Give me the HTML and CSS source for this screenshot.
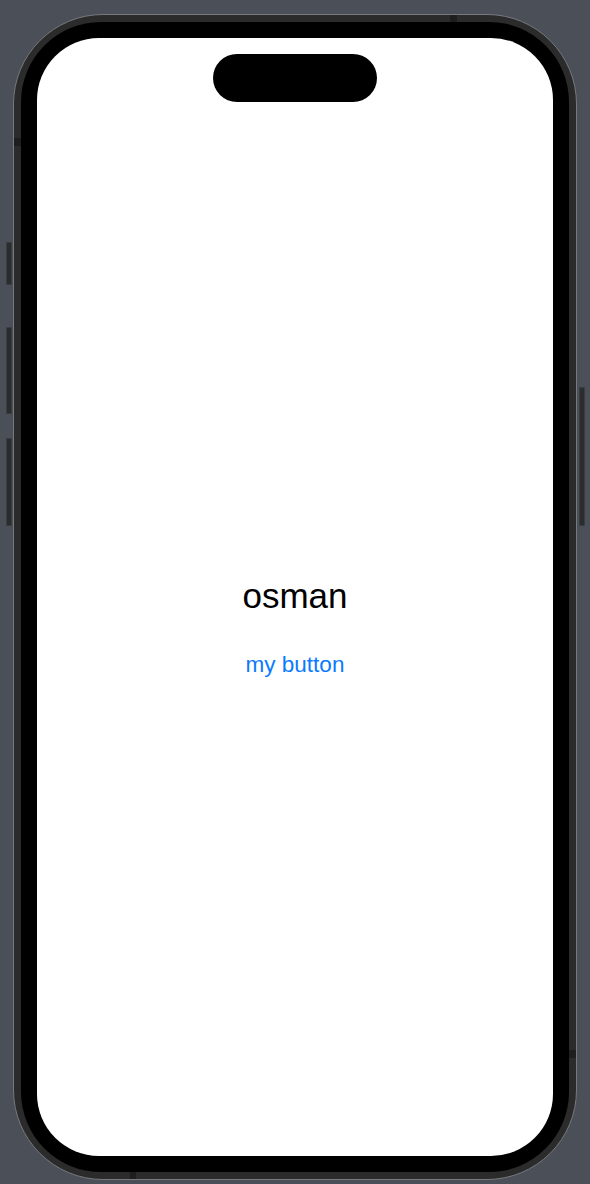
FILE: index.html
```html
<!DOCTYPE html>
<html lang="en">
<head>
<meta charset="utf-8">
<title>osman</title>
<link rel="stylesheet" href="styles.css">
</head>
<body>
  <div class="phone">
    <span class="side-btn btn-action"></span>
    <span class="side-btn btn-vol-up"></span>
    <span class="side-btn btn-vol-down"></span>
    <span class="side-btn btn-power"></span>
    <span class="band band-left"></span>
    <span class="band band-top"></span>
    <span class="band band-bottom"></span>
    <span class="band band-right"></span>
    <div class="bezel">
      <div class="screen">
        <div class="island"></div>
        <div class="content">
          <div class="title">osman</div>
          <button class="link-btn" type="button">my button</button>
        </div>
      </div>
    </div>
  </div>
</body>
</html>
```

FILE: styles.css
```css
html, body {
  margin: 0;
  padding: 0;
}

body {
  width: 590px;
  height: 1184px;
  background: #4b5058;
  overflow: hidden;
  font-family: "Liberation Sans", Arial, sans-serif;
}

.phone {
  position: relative;
  box-sizing: border-box;
  width: 564px;
  height: 1166px;
  margin: 14px 0 0 13px;
  padding: 7px;
  border: 1px solid #76797d;
  border-radius: 90px;
  background: #2b2b2c;
}

.side-btn {
  position: absolute;
  width: 6px;
  background: #2b2c2e;
  border: 1px solid #3a3c40;
  box-sizing: border-box;
  border-radius: 1px;
}

.btn-action { left: -8px; top: 227px; height: 43px; }
.btn-vol-up { left: -8px; top: 312px; height: 87px; }
.btn-vol-down { left: -8px; top: 423px; height: 88px; }
.btn-power { right: -9px; top: 372px; height: 139px; }

.band {
  position: absolute;
  background: #1e1e1f;
}

.band-left { left: 0; top: 123px; width: 7px; height: 8px; }
.band-top { top: 0; left: 436px; width: 7px; height: 7px; }
.band-bottom { bottom: 0; left: 116px; width: 6px; height: 7px; }
.band-right { right: 0; top: 1035px; width: 7px; height: 8px; }

.bezel {
  box-sizing: border-box;
  height: 100%;
  padding: 16px;
  background: #000;
  border-radius: 80px;
}

.screen {
  height: 100%;
  background: #fff;
  border-radius: 62px;
  display: flex;
  flex-direction: column;
  align-items: center;
  overflow: hidden;
}

.island {
  width: 164px;
  height: 48px;
  margin-top: 16px;
  border-radius: 24px;
  background: #000;
  flex: none;
}

.content {
  display: flex;
  flex-direction: column;
  align-items: center;
  margin-top: 473px;
}

.title {
  font-size: 35px;
  line-height: 42px;
  color: #000;
}

.link-btn {
  margin-top: 34px;
  padding: 0;
  border: 0;
  background: none;
  font-family: "Liberation Sans", Arial, sans-serif;
  font-size: 22.5px;
  line-height: 27px;
  color: #0a7aff;
  cursor: pointer;
}
```
